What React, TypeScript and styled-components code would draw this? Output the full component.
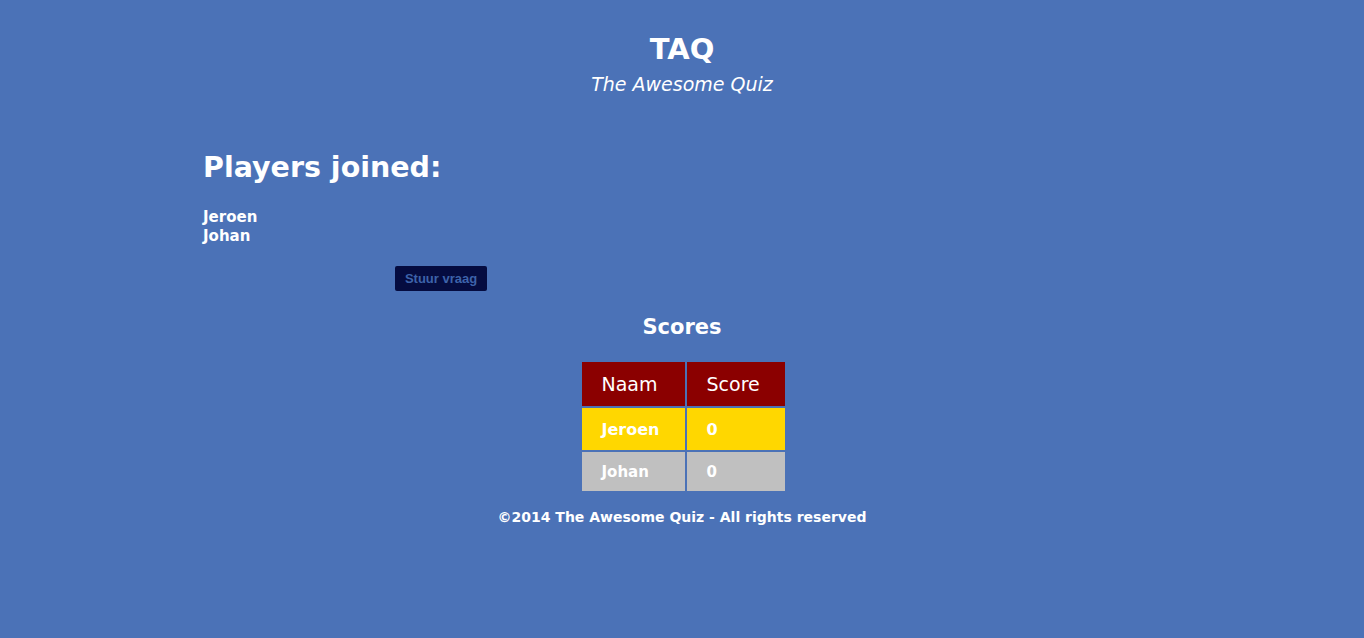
import { FC } from "react";
import styled, { createGlobalStyle } from "styled-components";

const GlobalStyle = createGlobalStyle`
  html, body {
    margin: 0;
    padding: 0;
    background-color: #4b72b7;
    min-height: 638px;
  }
  body {
    font-family: "DejaVu Sans", "Noto Sans", sans-serif;
    color: #ffffff;
  }
`;

type Player = { name: string; score: number };

const players: Player[] = [
  { name: "Jeroen", score: 0 },
  { name: "Johan", score: 0 },
];

const rowColors = ["#ffd700", "#c0c0c0"];

const App: FC = () => {
  return (
    <Page>
      <GlobalStyle />
      <Header>
        <Title>TAQ</Title>
        <Subtitle>The Awesome Quiz</Subtitle>
      </Header>
      <Main>
        <PlayersTitle>Players joined:</PlayersTitle>
        <PlayerList>
          {players.map((p) => (
            <li key={p.name}>{p.name}</li>
          ))}
        </PlayerList>
        <ButtonRow>
          <SendButton>Stuur vraag</SendButton>
        </ButtonRow>
      </Main>
      <ScoresTitle>Scores</ScoresTitle>
      <ScoreTable>
        <thead>
          <tr>
            <HeadCell>Naam</HeadCell>
            <HeadCell>Score</HeadCell>
          </tr>
        </thead>
        <tbody>
          {players.map((p, i) => (
            <tr key={p.name}>
              <Cell $bg={rowColors[i]} $big={i === 0}>
                {p.name}
              </Cell>
              <Cell $bg={rowColors[i]} $big={i === 0}>
                {p.score}
              </Cell>
            </tr>
          ))}
        </tbody>
      </ScoreTable>
      <Footer>©2014 The Awesome Quiz - All rights reserved</Footer>
    </Page>
  );
};

export default App;

const Page = styled.div`
  display: flex;
  flex-direction: column;
  align-items: center;
  padding-top: 31px;
`;

const Header = styled.header`
  text-align: center;
`;

const Title = styled.h1`
  margin: 0;
  font-size: 29px;
  font-weight: bold;
  line-height: 36px;
`;

const Subtitle = styled.div`
  margin-top: 5px;
  font-size: 19px;
  font-style: italic;
  line-height: 24px;
`;

const Main = styled.section`
  width: 960px;
  margin-top: 52px;
  padding-left: 2px;
`;

const PlayersTitle = styled.h2`
  margin: 0;
  font-size: 28.5px;
  font-weight: bold;
  line-height: 40px;
`;

const PlayerList = styled.ul`
  list-style: none;
  margin: 20px 0 0;
  padding: 0;
  font-size: 15px;
  font-weight: bold;
  line-height: 19px;
`;

const ButtonRow = styled.div`
  margin-top: 20px;
  padding-left: 192px;
`;

const SendButton = styled.button`
  width: 92px;
  height: 25px;
  background-color: #050c40;
  color: #3d63aa;
  border: none;
  border-radius: 2px;
  font-family: "Liberation Sans", Arial, sans-serif;
  font-weight: bold;
  font-size: 13px;
  cursor: pointer;
`;

const ScoresTitle = styled.h3`
  margin: 23px 0 0;
  font-size: 21px;
  font-weight: bold;
  line-height: 26px;
`;

const ScoreTable = styled.table`
  margin-top: 20px;
  margin-left: 2px;
  border-collapse: separate;
  border-spacing: 2px;
`;

const HeadCell = styled.th`
  background-color: #8b0000;
  height: 44px;
  padding: 0 20px;
  text-align: left;
  font-size: 19px;
  font-weight: 500;
  &:first-child {
    width: 63px;
  }
  &:last-child {
    width: 58px;
  }
`;

const Cell = styled.td<{ $bg: string; $big: boolean }>`
  background-color: ${(p) => p.$bg};
  height: ${(p) => (p.$big ? "42px" : "39px")};
  padding: 0 20px;
  font-size: ${(p) => (p.$big ? "16px" : "15px")};
  font-weight: bold;
`;

const Footer = styled.footer`
  margin-top: 16px;
  font-size: 14px;
  font-weight: bold;
`;
